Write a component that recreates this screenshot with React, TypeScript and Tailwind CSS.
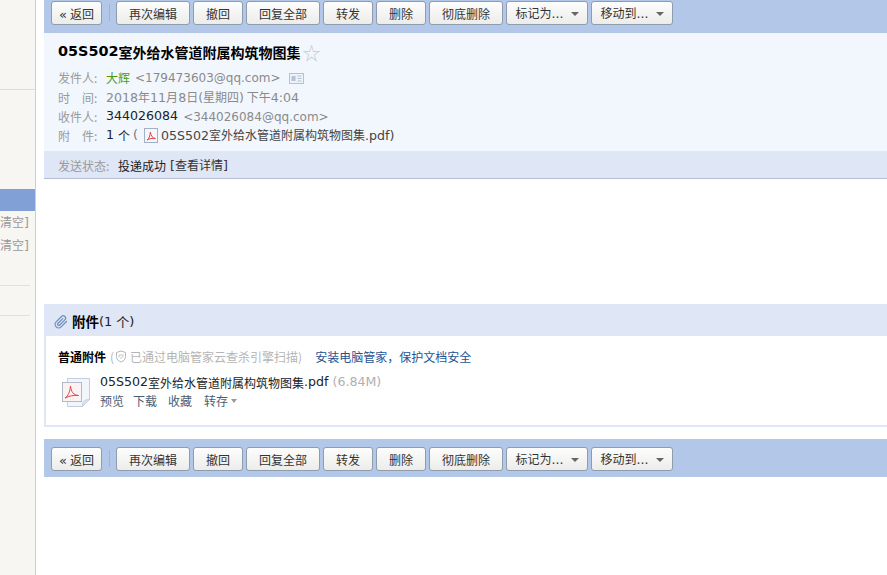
const L = ({ children, className = "", size = "text-[12.6px]" }: { children: React.ReactNode; className?: string; size?: string }) => (
  <span className={`[font-family:'DejaVu_Sans',sans-serif] ${size} ${className}`}>{children}</span>
);

const Btn = ({ w, children, caret }: { w: string; children: React.ReactNode; caret?: boolean }) => (
  <button className={`${w} h-[24px] pt-[2px] shrink-0 flex items-center justify-center gap-[7px] rounded-[3px] border border-[#8f9cad] bg-gradient-to-b from-[#fdfdfd] to-[#ececea] text-[12px] text-[#333] leading-none whitespace-nowrap`}>
    <span>{children}</span>
    {caret && <span className="w-0 h-0 border-x-[4px] border-x-transparent border-t-[4px] border-t-[#666]" />}
  </button>
);

const Toolbar = ({ className }: { className: string }) => (
  <div className={`flex items-start bg-[#b3c7e8] pl-[7px] ${className}`}>
    <Btn w="w-[51px]"><L size="text-[13px]" className="mr-[3px]">«</L>返回</Btn>
    <div className="w-px h-[17px] bg-[#9fb3d3] ml-[7px] mr-[6px] mt-[3px] shrink-0" />
    <div className="flex gap-[3px]">
      <Btn w="w-[74px]">再次编辑</Btn>
      <Btn w="w-[50px]">撤回</Btn>
      <Btn w="w-[74px]">回复全部</Btn>
      <Btn w="w-[50px]">转发</Btn>
      <Btn w="w-[50px]">删除</Btn>
      <Btn w="w-[74px]">彻底删除</Btn>
      <Btn w="w-[82px]" caret>标记为<L>...</L></Btn>
      <Btn w="w-[82px]" caret>移动到<L>...</L></Btn>
    </div>
  </div>
);

const PdfMini = () => (
  <svg width="14" height="15" viewBox="0 0 14 15" className="shrink-0">
    <rect x="0.5" y="0.5" width="13" height="14" fill="#f4f6fa" stroke="#9fb0c8" />
    <path d="M3 12c2-1 3-4 3.400-8 .5 4 2 6 5 6.500-3-.4-6 0-8.400 1.500z" fill="none" stroke="#d8484a" strokeWidth="1" />
  </svg>
);

const PdfBig = () => (
  <svg width="30" height="31" viewBox="0 0 30 31" className="shrink-0">
    <path d="M6.500 1.500h22v21l-7 7h-15z" fill="#f2f5fb" stroke="#c3cfdf" />
    <path d="M21.500 29.500c0-4 1-7 7-7l-7 7z" fill="#dde6f2" stroke="#c3cfdf" />
    <rect x="1.500" y="5.500" width="19" height="19" fill="#fbf3f3" stroke="#b5b8c6" />
    <path d="M4 21c3-2 5-6 5.500-12 .6 6 3 9 8 9.500-5-.5-9.500.5-13.500 2.500z" fill="none" stroke="#dc4a4c" strokeWidth="1" />
  </svg>
);

const Row = ({ label, h = "h-[19px]", children }: { label: string; h?: string; children: React.ReactNode }) => (
  <div className={`flex items-center ${h} text-[12px]`}>
    <span className="w-[48px] shrink-0 text-[#9a9a9a]">{label}</span>
    {children}
  </div>
);

export default function App() {
  return (
    <div className="flex w-[887px] h-[575px] overflow-hidden bg-white text-[12px] text-[#222] [font-family:'Noto_Sans_CJK_SC','DejaVu_Sans',sans-serif]">
      <aside className="w-[36px] shrink-0 flex flex-col items-stretch bg-[#f8f6f2] border-r border-[#cfcfcf] overflow-hidden">
        <div className="h-[90px] shrink-0 border-b border-[#dedcd8]" />
        <div className="h-[99px] shrink-0" />
        <div className="h-[22px] shrink-0 bg-[#80a0d6]" />
        <div className="flex justify-end h-[23px] items-center pr-[6px] text-[#999] whitespace-nowrap"><span>清空<L>]</L></span></div>
        <div className="flex justify-end h-[23px] items-center pr-[6px] text-[#999] whitespace-nowrap"><span>清空<L>]</L></span></div>
        <div className="h-[29px] shrink-0 border-b border-[#e2e0dc] mr-[5px]" />
        <div className="h-[30px] shrink-0 border-b border-[#e2e0dc] mr-[5px]" />
      </aside>

      <main className="flex-1 min-w-0 ml-[8px] flex flex-col">
        <Toolbar className="h-[33px] pt-[1px] shrink-0" />

        <section className="h-[118px] shrink-0 bg-[#f2f7fe] pl-[14px] pt-[9px]">
          <h1 className="flex items-center h-[20px] text-[14px] font-bold text-black whitespace-nowrap">
            <L size="text-[14.4px]">05S502</L>
            <span>室外给水管道附属构筑物图集</span>
            <span className="ml-[2px] text-[18px] font-normal text-[#c4c9d2] leading-none">☆</span>
          </h1>
          <div className="mt-[6px]">
            <Row label="发件人:" h="h-[20px]">
              <span className="text-[#4d9a12]">大辉</span>
              <L size="text-[12px]" className="ml-[5px] text-[#8a8a8a]">&lt;179473603@qq.com&gt;</L>
              <svg width="15" height="11" viewBox="0 0 15 11" className="ml-[8px]">
                <rect x="0.500" y="0.500" width="14" height="10" fill="#eef3fa" stroke="#b3c2d5" />
                <rect x="2.500" y="3" width="4" height="5" fill="#b3c2d5" />
                <path d="M8.500 3h4M8.500 5.500h4M8.500 8h4" stroke="#b3c2d5" />
              </svg>
            </Row>
            <Row label="时　间:">
              <span className="text-[#8a8a8a] whitespace-nowrap">
                <L>2018</L>年<L>11</L>月<L>8</L>日<L>(</L>星期四<L>)</L> 下午<L>4:04</L>
              </span>
            </Row>
            <Row label="收件人:">
              <L className="text-[#222]">344026084</L>
              <L size="text-[12px]" className="ml-[5px] text-[#8a8a8a]">&lt;344026084@qq.com&gt;</L>
            </Row>
            <Row label="附　件:">
              <L className="text-[#222]">1</L>
              <span className="ml-[4px] text-[#222]">个</span>
              <L className="ml-[3px] mr-[6px] text-[#777]">(</L>
              <PdfMini />
              <span className="ml-[3px] text-[#444] whitespace-nowrap">
                <L>05S502</L>室外给水管道附属构筑物图集<L>.pdf)</L>
              </span>
            </Row>
          </div>
        </section>

        <div className="h-[28px] pt-[2px] shrink-0 bg-[#dfe6f6] border-b border-[#b3bfd4] pl-[14px] flex items-center whitespace-nowrap">
          <span className="w-[60px] text-[#9a9a9a]">发送状态:</span>
          <span className="text-[#222]">投递成功</span>
          <span className="ml-[4px] text-[#333]"><L>[</L>查看详情<L>]</L></span>
        </div>

        <div className="h-[125px] shrink-0" />

        <div className="h-[32px] shrink-0 bg-[#dfe6f6] pl-[10px] pt-[3px] flex items-center whitespace-nowrap">
          <svg width="14" height="14" viewBox="0 0 24 24" fill="none" stroke="#6f8fbd" strokeWidth="2.200" strokeLinecap="round" strokeLinejoin="round">
            <path d="M21.400 11.100l-9.200 9.200a6 6 0 0 1-8.500-8.500l9.200-9.200a4 4 0 0 1 5.700 5.700l-9.200 9.200a2 2 0 0 1-2.800-2.800l8.500-8.500" />
          </svg>
          <span className="ml-[4px] font-bold text-black text-[13.5px]">附件</span>
          <L size="text-[13px]" className="text-[#222]">(1</L>
          <span className="ml-[4px] text-[13px]">个</span>
          <L size="text-[13px]">)</L>
        </div>

        <div className="h-[91px] shrink-0 border-l-2 border-b-2 border-[#dfe6f6] pl-[12px] pt-[12px] box-border">
          <div className="flex items-center h-[17px] whitespace-nowrap">
            <span className="font-bold text-black">普通附件</span>
            <span className="ml-[4px] text-[#b5b5b5]">(</span>
            <svg width="12" height="13" viewBox="0 0 12 13" className="ml-[1px]">
              <path d="M6 1l4.500 1.500v4c0 3-2 4.500-4.500 5.500-2.500-1-4.500-2.500-4.500-5.500v-4z" fill="none" stroke="#b5b5b5" />
              <path d="M3.800 5.500c.5-1.200 1.700-1 2.200 0 .5-1 1.700-1.200 2.200 0 .2 1-1.200 2-2.200 2.800-1-.8-2.400-1.800-2.200-2.800z" fill="none" stroke="#b5b5b5" strokeWidth="0.800" />
            </svg>
            <span className="ml-[3px] text-[#b5b5b5]">已通过电脑管家云查杀引擎扫描)</span>
            <span className="ml-[13px] text-[#1e5494]">安装电脑管家，保护文档安全</span>
          </div>
          <div className="flex mt-[12px] ml-[3px]">
            <PdfBig />
            <div className="ml-[9px] -mt-[4px]">
              <div className="flex items-center h-[19px] whitespace-nowrap text-[#222]">
                <L>05S502</L><span>室外给水管道附属构筑物图集</span><L>.pdf</L>
                <L className="ml-[4px] text-[#b0b0b0]">(6.84M)</L>
              </div>
              <div className="flex items-center h-[17px] text-[#4a5d75] whitespace-nowrap">
                <span>预览</span>
                <span className="ml-[9px]">下载</span>
                <span className="ml-[11px]">收藏</span>
                <span className="ml-[12px]">转存</span>
                <span className="ml-[3px] mt-[1px] w-0 h-0 border-x-[3.500px] border-x-transparent border-t-[4px] border-t-[#999]" />
              </div>
            </div>
          </div>
        </div>

        <div className="h-[12px] shrink-0" />
        <Toolbar className="h-[38px] pt-[8px] shrink-0" />
      </main>
    </div>
  );
}
